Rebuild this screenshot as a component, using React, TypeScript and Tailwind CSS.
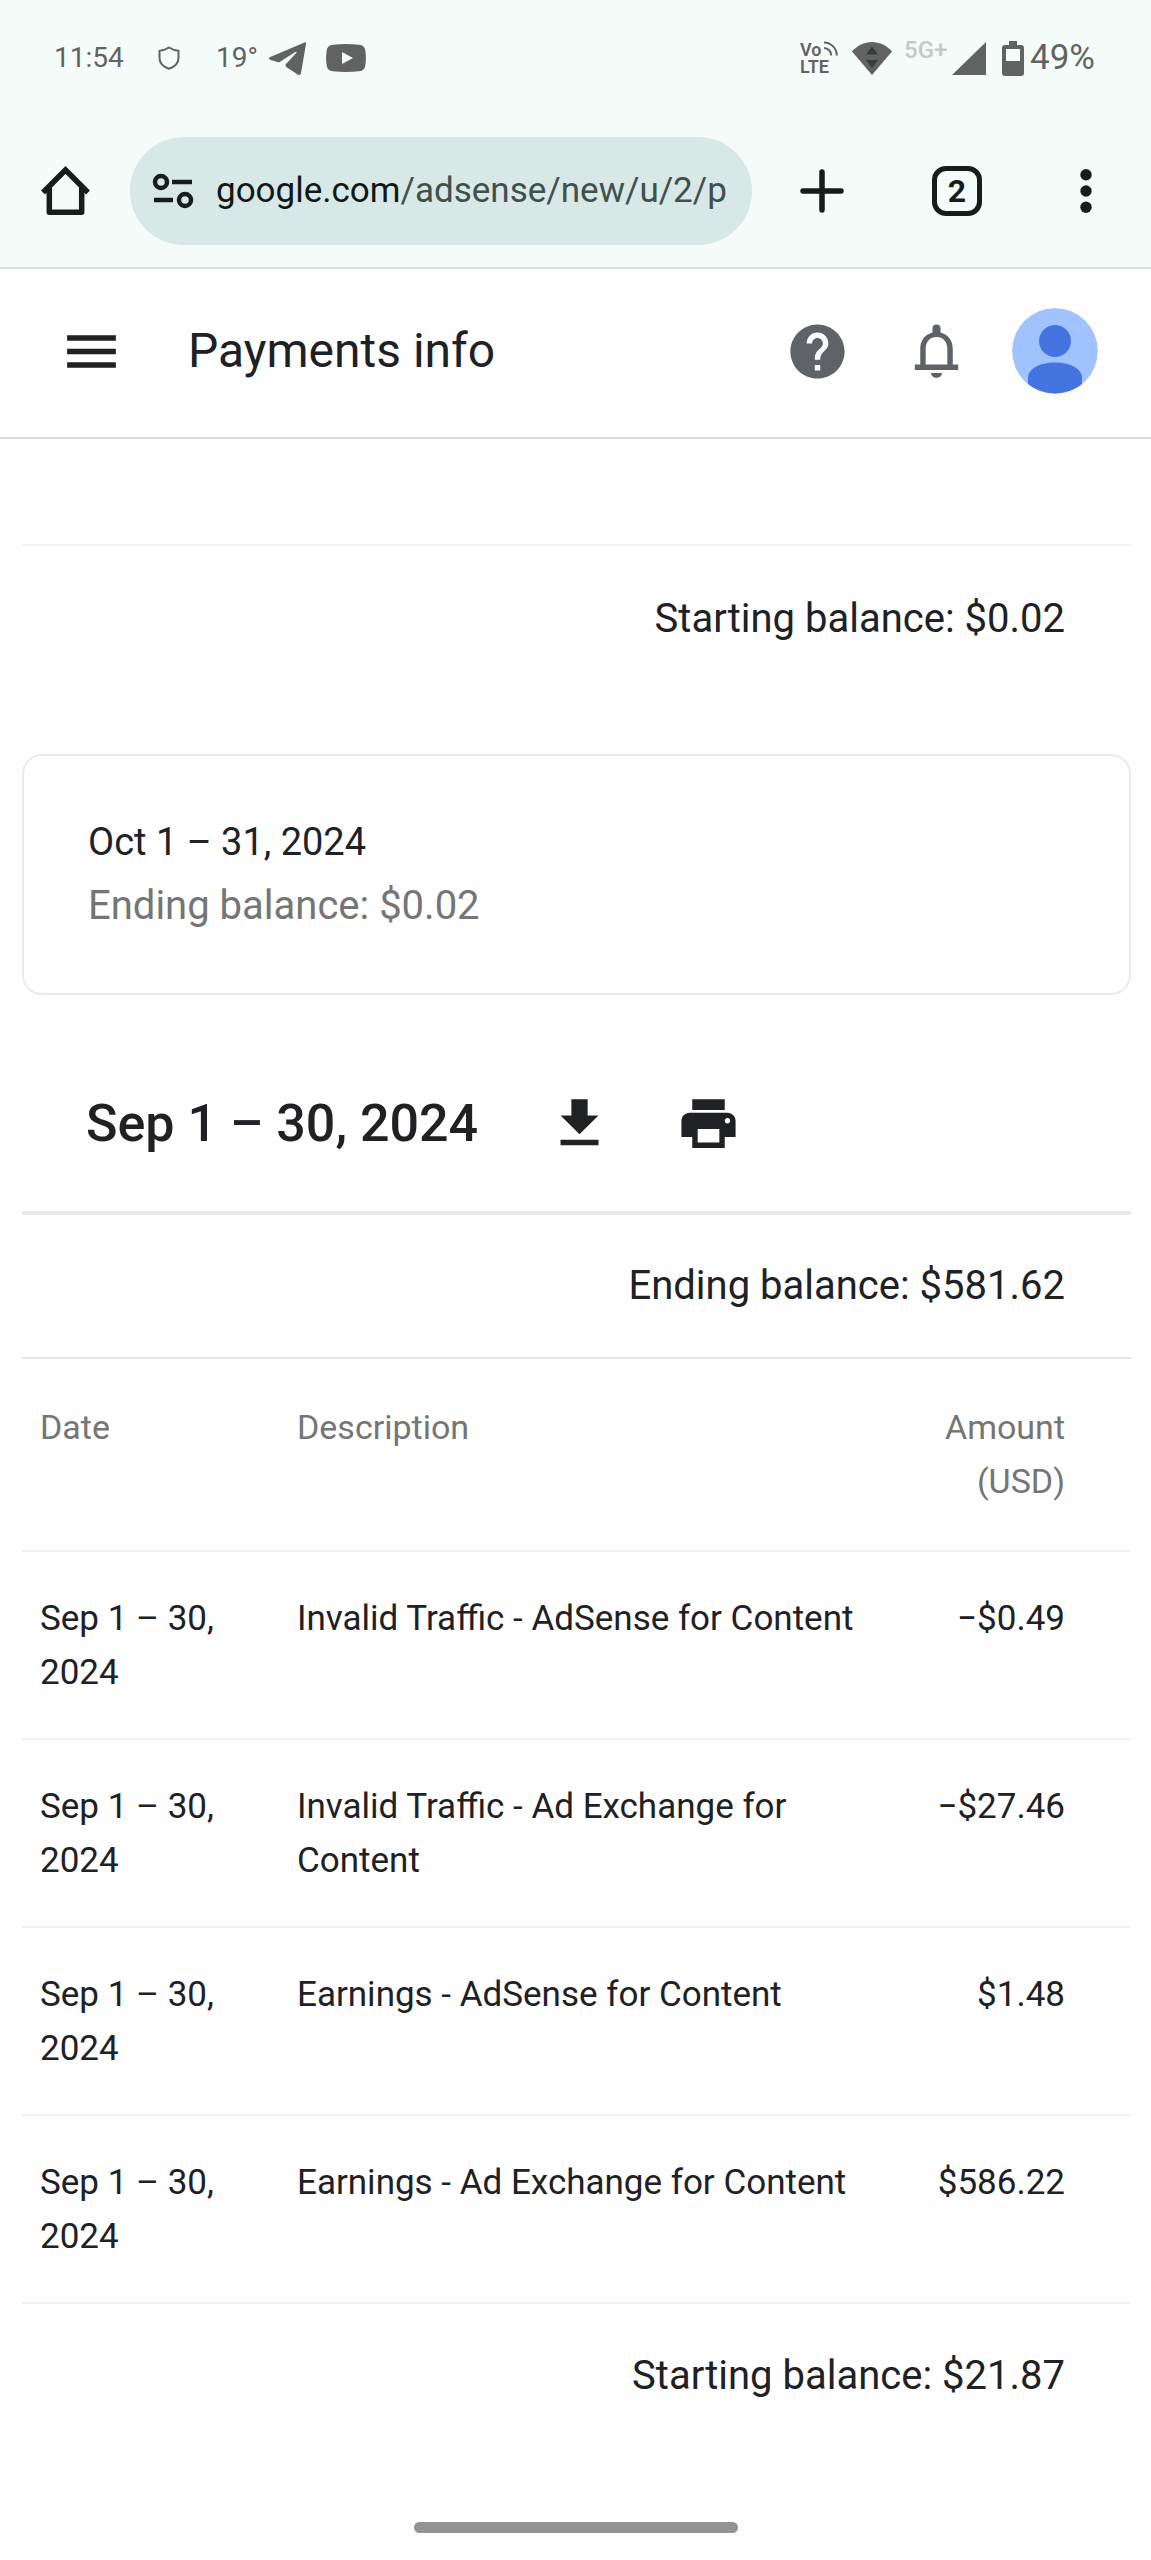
import type { ReactNode } from "react"
import { MdHelp, MdMenu, MdPrint } from "react-icons/md"

const transactions = [
  { date: "Sep 1 – 30, 2024", description: "Invalid Traffic - AdSense for Content", amount: "−$0.49" },
  { date: "Sep 1 – 30, 2024", description: "Invalid Traffic - Ad Exchange for Content", amount: "−$27.46" },
  { date: "Sep 1 – 30, 2024", description: "Earnings - AdSense for Content", amount: "$1.48" },
  { date: "Sep 1 – 30, 2024", description: "Earnings - Ad Exchange for Content", amount: "$586.22" },
]

function IconButton({ label, children, className = "" }: { label: string; children: ReactNode; className?: string }) {
  return (
    <button type="button" aria-label={label} className={`flex shrink-0 items-center justify-center ${className}`}>
      {children}
    </button>
  )
}

function StatusBar() {
  return (
    <div className="flex h-[116px] items-center justify-between pl-[54px] pr-14 text-[#616362]">
      <div className="flex items-center">
        <span className="w-[104px] text-[28px] leading-10">11:54</span>
        <svg viewBox="0 0 22 24" className="h-6 w-[22px]" fill="none" stroke="currentColor" strokeWidth="2">
          <path d="M11 1.500C8.600 3 5 4.500 1.500 4.800V12c0 5.500 4.500 9 9.500 10.800C16 21 20.500 17.500 20.500 12V4.800C17 4.500 13.400 3 11 1.500Z" strokeLinejoin="round" />
        </svg>
        <span className="ml-9 w-[53px] text-[28px] leading-10">19°</span>
        <svg viewBox="0 0 37 33" className="h-[33px] w-[37px]" fill="currentColor">
          <path d="M35.500.4 1.200 15.100c-1.600.7-1.500 2.100 0 2.600l8.600 2.700L26.400 10c.9-.5 1.600.1 1 .7L17.200 21.800c-.9 1-.9 2.300.1 3.100l11.400 7.500c1.600 1 2.900.5 3.300-1.300L37 2c.4-1.500-.4-2.200-1.500-1.600Z" />
        </svg>
        <svg viewBox="0 0 40 28" className="ml-5 h-7 w-10">
          <path d="M7 .7Q20-.6 33 .7 38.700 1.200 39.300 6.500 40.500 14 39.300 21.500 38.700 26.800 33 27.300 20 28.600 7 27.300 1.300 26.800.7 21.500-.5 14 .7 6.500 1.300 1.200 7 .7Z" fill="currentColor" />
          <path d="m16 8 11 6-11 6Z" fill="#f5fbf9" />
        </svg>
      </div>
      <div className="flex items-center">
        <div className="relative w-[52px] text-[18px] font-semibold leading-[17px]">
          <div>Vo</div>
          <div>LTE</div>
          <svg viewBox="0 0 14 15" className="absolute left-6 top-0 h-[15px] w-[14px]" fill="none" stroke="currentColor" strokeWidth="2">
            <path d="M0 1.500A13 13 0 0 1 12.800 14.500M0 7a7.500 7.500 0 0 1 7.300 7.500" />
          </svg>
        </div>
        <svg viewBox="0 0 40 33" className="h-[33px] w-10">
          <path d="M0 9.500C5.500 3.500 12 0 20 0s14.500 3.500 20 9.500L20 33Z" fill="currentColor" />
          <path d="m20 4.500 6 8H14ZM20 26l-6-8h12Z" fill="#3a3c3b" />
        </svg>
        <span className="-mt-4 ml-3 w-12 whitespace-nowrap text-[24px] font-medium leading-6 text-[#c5c9c7]">5G+</span>
        <svg viewBox="0 0 34 33" className="h-[33px] w-[34px]" fill="currentColor">
          <path d="M34 0v33H0Z" />
        </svg>
        <svg viewBox="0 0 22 35" className="ml-4 h-[35px] w-[22px]">
          <path d="M7 0h8v4h4q3 0 3 3v25q0 3-3 3H3q-3 0-3-3V7q0-3 3-3h4Z" fill="currentColor" />
          <path d="M4 8h14v12H4Z" fill="#f5fbf9" />
        </svg>
        <span className="ml-[6px] text-[35px] leading-10">49%</span>
      </div>
    </div>
  )
}

function BrowserBar() {
  return (
    <div className="flex items-center justify-between pb-[22px] pl-[41px] pr-[59px] pt-[21px] text-[#171d1b]">
      <IconButton label="Home" className="h-[50px] w-[49px]">
        <svg viewBox="0 0 49 50" className="h-[50px] w-[49px]" fill="none" stroke="currentColor">
          <path d="M2 26.500 24.500 4 47 26.500" strokeWidth="5.500" />
          <path d="M8.300 21v25.300h32.400V21" strokeWidth="5.500" strokeLinejoin="round" />
        </svg>
      </IconButton>
      <div className="ml-10 mr-12 flex h-[108px] min-w-0 flex-1 items-center rounded-full bg-[#d7e8e6] pl-[22px] pr-3">
        <IconButton label="Site information" className="h-[36px] w-[42px]">
          <svg viewBox="0 0 42 36" className="h-[36px] w-[42px]" fill="none" stroke="currentColor" strokeWidth="4.500">
            <circle cx="9" cy="9" r="6" />
            <path d="M20 9h20M2 27h19" />
            <circle cx="33" cy="27" r="6" />
          </svg>
        </IconButton>
        <a href="#url" className="ml-[22px] min-w-0 overflow-hidden whitespace-nowrap text-[35px] leading-[48px] text-[#40504d]">
          <span className="text-[#101816]">google.com</span>/adsense/new/u/2/p
        </a>
      </div>
      <div className="flex items-center">
        <IconButton label="New tab" className="h-[44px] w-[44px]">
          <svg viewBox="0 0 44 44" className="h-11 w-11" stroke="currentColor" strokeWidth="5.500" strokeLinecap="round">
            <path d="M22 3v38M3 22h38" />
          </svg>
        </IconButton>
        <IconButton label="Open tabs" className="ml-[88px] h-[50px] w-[50px] rounded-[14px] border-[5px] border-[#171d1b] text-[32px] font-bold leading-8">
          2
        </IconButton>
        <IconButton label="More options" className="ml-[98px] h-[50px] w-3">
          <svg viewBox="0 0 12 44" className="h-11 w-3" fill="currentColor">
            <circle cx="6" cy="5.700" r="5.700" />
            <circle cx="6" cy="22" r="5.700" />
            <circle cx="6" cy="38.300" r="5.700" />
          </svg>
        </IconButton>
      </div>
    </div>
  )
}

function PageHeader() {
  return (
    <header className="flex h-[170px] items-center border-b-2 border-[#dadce0] pb-1 pl-[59px] pr-[53px]">
      <IconButton label="Main menu">
        <MdMenu className="size-[65px] text-[#202124]" />
      </IconButton>
      <h1 className="ml-16 flex-1 text-[48px] leading-[64px]">Payments info</h1>
      <IconButton label="Help">
        <MdHelp className="size-[65px] text-[#5f6368]" />
      </IconButton>
      <IconButton label="Notifications" className="ml-[54px]">
        <svg viewBox="0 0 24 24" className="size-[65px]" fill="#5f6368">
          <path fillRule="evenodd" d="M10.500 5V3.500a1.500 1.500 0 0 1 3 0V5C16.300 5.700 18 8 18 11v5.800h2v2H4v-2h2V11c0-3 1.700-5.300 4.500-6ZM8 16.800h8V11c0-2.700-1.600-4.400-4-4.400S8 8.300 8 11v5.800ZM10 19.900h4c0 1-.9 1.800-2 1.800s-2-.8-2-1.800Z" />
        </svg>
      </IconButton>
      <IconButton label="Account" className="ml-[43px] overflow-hidden rounded-full">
        <svg viewBox="0 0 86 86" className="size-[86px]">
          <circle cx="43" cy="43" r="43" fill="#a0c3ff" />
          <circle cx="43" cy="33" r="16" fill="#4374e0" />
          <path d="M16 76V70c0-9 11-15.500 27-15.500S70 61 70 70v6a43 43 0 0 1-54 0Z" fill="#4374e0" />
        </svg>
      </IconButton>
    </header>
  )
}

export default function App() {
  return (
    <div className="flex min-h-screen flex-col bg-[#fefefe] font-['Roboto',sans-serif] text-[#202124]">
      <div className="border-b-2 border-[#dbe2e0] bg-[#f5fbf9]">
        <StatusBar />
        <BrowserBar />
      </div>
      <PageHeader />

      <main className="flex-1 pl-[22px] pr-5 pt-[105px] text-[40px]">
        <p className="border-t-2 border-[#f4f5f5] pr-[66px] pt-[47px] text-right leading-[52px]">Starting balance: $0.02</p>

        <section className="mt-[109px] rounded-[20px] border-2 border-[#ebebeb] px-16 pb-[55px] pt-[54px] leading-16">
          <h2 className="text-[38px] leading-16">Oct 1 – 31, 2024</h2>
          <p className="text-[#757575]">Ending balance: $0.02</p>
        </section>

        <section>
          <div className="flex items-center pb-[55px] pl-16 pt-24">
            <h2 className="text-[52px] font-medium leading-16">Sep 1 – 30, 2024</h2>
            <IconButton label="Download" className="ml-[69px]">
              <svg viewBox="0 0 24 24" className="size-[65px]" fill="currentColor">
                <path d="M19 9h-4V3H9v6H5l7 7 7-7zM5 18v2h14v-2H5z" />
              </svg>
            </IconButton>
            <IconButton label="Print" className="ml-16">
              <MdPrint className="size-[65px]" />
            </IconButton>
          </div>
          <p className="border-t-4 border-[#e8e8e8] py-[45px] pr-[66px] text-right leading-[52px]">Ending balance: $581.62</p>
          <table className="w-full table-fixed border-t-2 border-[#e4e4e4] text-left text-[35px] leading-[54px]">
            <thead>
              <tr className="border-b-2 border-[#f2f2f2] align-top text-[34px] text-[#757575]">
                <th scope="col" className="w-[275px] pb-[42px] pl-[18px] pt-[41px] font-normal">Date</th>
                <th scope="col" className="pb-[42px] pt-[41px] font-normal">Description</th>
                <th scope="col" className="w-[247px] pb-[42px] pr-[66px] pt-[41px] text-right font-normal">Amount (USD)</th>
              </tr>
            </thead>
            <tbody>
              {transactions.map((row) => (
                <tr key={row.description} className="border-b-2 border-[#f2f2f2] align-top">
                  <td className="pb-[38px] pl-[18px] pr-8 pt-10">{row.date}</td>
                  <td className="pb-[38px] pt-10">{row.description}</td>
                  <td className="pb-[38px] pr-[66px] pt-10 text-right">{row.amount}</td>
                </tr>
              ))}
            </tbody>
          </table>
          <p className="pr-[66px] pt-[46px] text-right leading-[52px]">Starting balance: $21.87</p>
        </section>
      </main>

      <footer className="flex justify-center pb-[27px]">
        <div className="h-[11px] w-[324px] rounded-full bg-[#939393]" />
      </footer>
    </div>
  )
}
